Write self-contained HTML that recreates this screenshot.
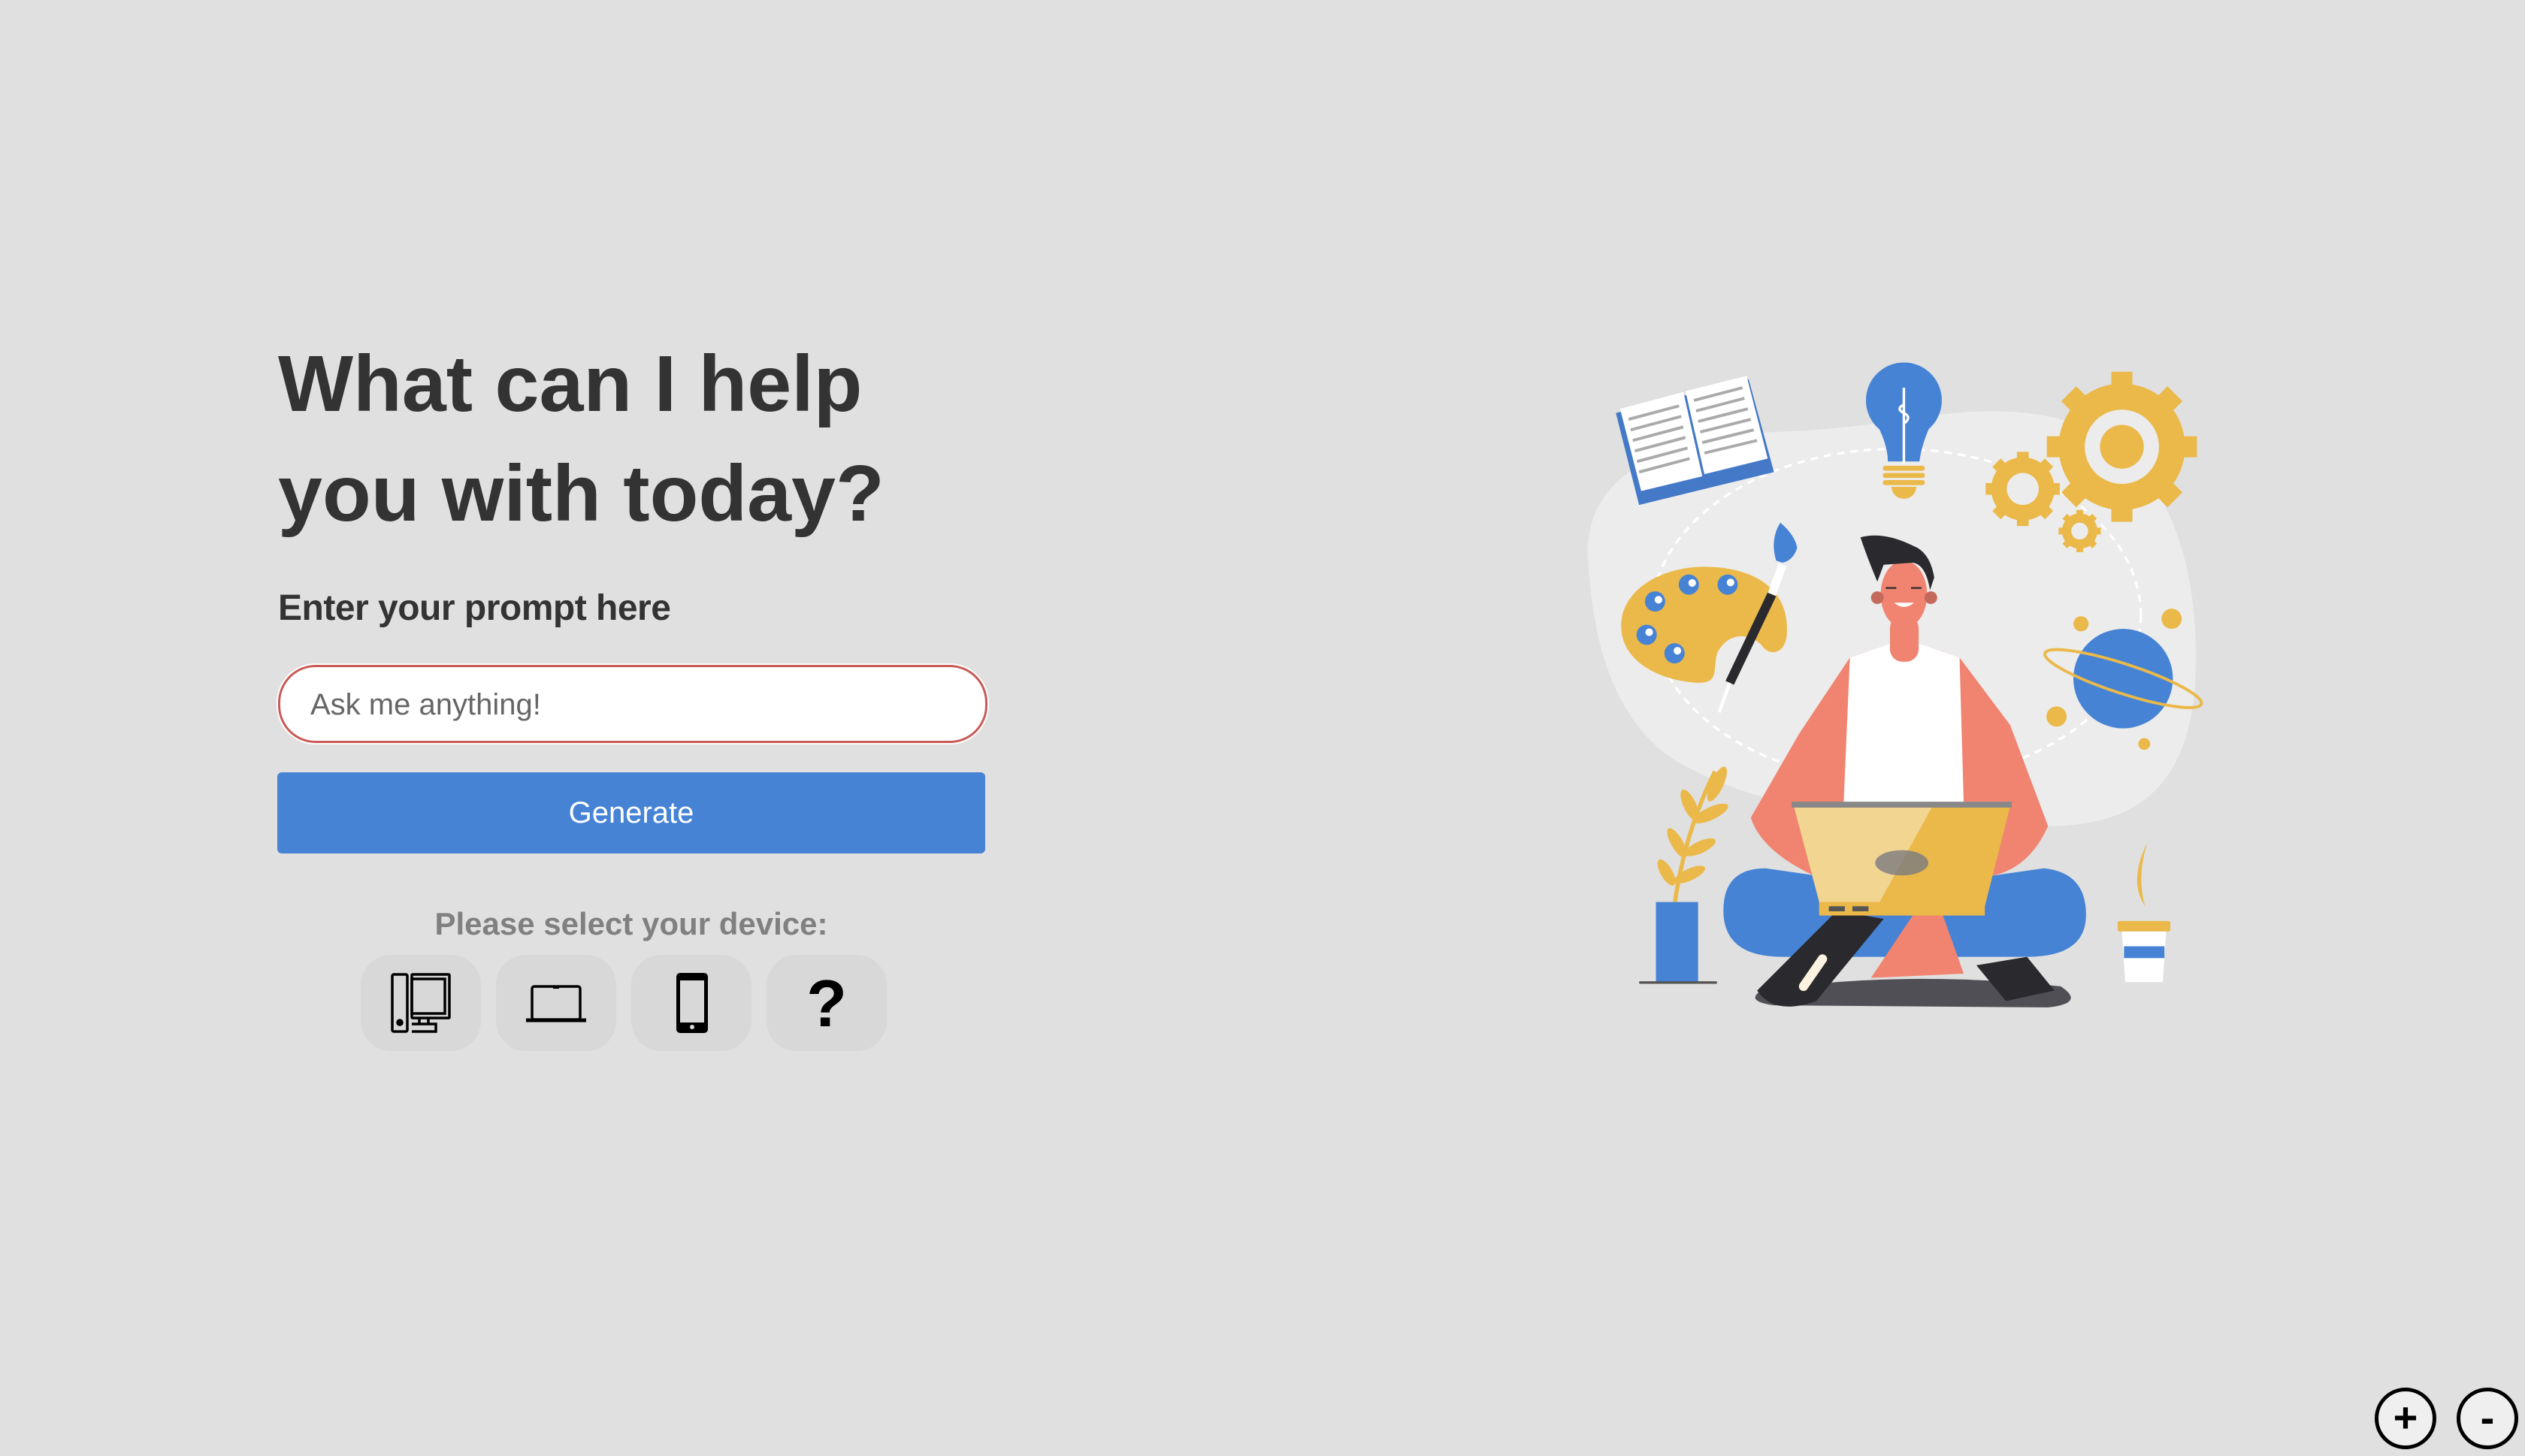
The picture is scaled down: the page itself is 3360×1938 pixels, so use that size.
<!DOCTYPE html>
<html><head><meta charset="utf-8"><style>
html,body{margin:0;padding:0}
body{width:3360px;height:1938px;background:#e0e0e0;position:relative;overflow:hidden;font-family:"Liberation Sans",sans-serif}
.h{position:absolute;left:370px;top:438px;font-weight:bold;font-size:106px;line-height:146px;color:#333;letter-spacing:0;margin:0}
.sub{position:absolute;left:370px;top:782px;font-weight:bold;font-size:48px;color:#333;letter-spacing:-0.5px}
.inp{position:absolute;left:370px;top:885px;width:938px;height:98px;border:3px solid #c85a57;border-radius:50px;background:#fff;box-shadow:0 0 0 2px #fff}
.inp span{position:absolute;left:40px;top:28px;font-size:40px;color:#666}
.btn{position:absolute;left:369px;top:1028px;width:942px;height:108px;background:#4683d5;border-radius:6px;color:#fff;font-size:40px;text-align:center;line-height:108px}
.ps{position:absolute;left:370px;width:940px;top:1206px;text-align:center;font-size:42px;color:#808080;font-weight:bold}
.dev{position:absolute;top:1271px;width:160px;height:128px;background:#d8d8d8;border-radius:40px}
.dev svg{position:absolute;left:40px;top:24px}
.z{position:absolute;top:1847px;width:72px;height:72px;border:5px solid #000;border-radius:50%;background:#efefef;text-align:center;font-weight:bold;font-size:56px;line-height:70px}
</style></head><body>
<h1 class="h">What can I help<br>you with today?</h1>
<div class="sub">Enter your prompt here</div>
<div class="inp"><span>Ask me anything!</span></div>
<div class="btn">Generate</div>
<div class="ps">Please select your device:</div>
<div class="dev" style="left:480px"><svg width="80" height="80" viewBox="0 0 80 80" fill="none" stroke="#000" stroke-width="3.5"><rect x="2" y="2" width="20" height="76" rx="2"/><circle cx="12" cy="66" r="3" fill="#000"/><rect x="28" y="2" width="50" height="58" rx="1"/><rect x="28" y="8" width="44" height="46"/><path d="M38 60v8M50 60v8M28 68h32v10H28"/></svg></div>
<div class="dev" style="left:660px"><svg width="80" height="80" viewBox="0 0 80 80" fill="none" stroke="#000" stroke-width="3.5"><rect x="8" y="18" width="64" height="44" rx="3"/><path d="M0 63h80" stroke-width="5"/><path d="M36 19h8" stroke-width="4"/></svg></div>
<div class="dev" style="left:840px"><svg width="80" height="80" viewBox="0 0 80 80"><rect x="20" y="0" width="42" height="80" rx="5" fill="#000"/><rect x="25" y="10" width="32" height="56" fill="#d8d8d8"/><circle cx="41" cy="72" r="3" fill="#d8d8d8"/></svg></div>
<div class="dev" style="left:1020px"><div style="position:absolute;left:0;right:0;top:14px;text-align:center;font-size:88px;font-weight:bold">?</div></div>
<div class="z" style="left:3160px">+</div>
<div class="z" style="left:3269px">-</div>

<svg style="position:absolute;left:2080px;top:460px" width="880" height="900" viewBox="0 0 1568 1604">
<path d="M60 520C40 330 200 220 500 205C800 195 900 140 1100 160C1380 190 1490 420 1500 700C1510 980 1420 1140 1150 1140C900 1140 500 1130 260 980C110 880 70 680 60 520Z" fill="#ececec"/>
<ellipse cx="790" cy="640" rx="580" ry="395" fill="none" stroke="#fff" stroke-width="6" stroke-dasharray="18 14"/>
<path d="M125 160L440 80L500 300L180 378Z" fill="#4479c7"/>
<path d="M135 150L285 110L330 310L185 345Z" fill="#fff"/>
<path d="M290 108L435 72L485 268L335 305Z" fill="#fff"/>
<g stroke="#aaa" stroke-width="7"><path d="M155 175L275 143M160 200L280 168M165 225L285 193M170 250L290 218M175 275L295 243M180 300L300 268M310 130L425 100M315 155L430 125M320 180L438 150M325 205L445 175M330 230L452 200M335 255L460 225"/></g>
<circle cx="808" cy="130" r="90" fill="#4683d5"/>
<path d="M735 170Q770 230 770 275H845Q850 230 880 170Z" fill="#4683d5"/>
<path d="M808 100V280M808 140q-20 10 0 20q20 10 0 25" stroke="#fff" stroke-width="6" fill="none"/>
<g fill="#ebb94a"><rect x="758" y="285" width="100" height="12" rx="6"/><rect x="758" y="302" width="100" height="12" rx="6"/><rect x="758" y="319" width="100" height="12" rx="6"/><path d="M778 335h60q-5 28-30 28t-30-28z"/></g>
<g fill="#ebb94a">
<circle cx="1325" cy="240" r="150"/>
<g transform="translate(1325 240)"><rect x="-25" y="-178" width="50" height="356"/><rect x="-178" y="-25" width="356" height="50"/><rect x="-25" y="-178" width="50" height="356" transform="rotate(45)"/><rect x="-25" y="-178" width="50" height="356" transform="rotate(-45)"/></g>
<circle cx="1090" cy="340" r="75"/>
<g transform="translate(1090 340)"><rect x="-14" y="-88" width="28" height="176"/><rect x="-88" y="-14" width="176" height="28"/><rect x="-14" y="-88" width="28" height="176" transform="rotate(45)"/><rect x="-14" y="-88" width="28" height="176" transform="rotate(-45)"/></g>
<circle cx="1225" cy="440" r="42"/>
<g transform="translate(1225 440)"><rect x="-8" y="-50" width="16" height="100"/><rect x="-50" y="-8" width="100" height="16"/><rect x="-8" y="-50" width="16" height="100" transform="rotate(45)"/><rect x="-8" y="-50" width="16" height="100" transform="rotate(-45)"/></g>
</g>
<circle cx="1325" cy="240" r="88" fill="#ececec"/><circle cx="1325" cy="240" r="52" fill="#ebb94a"/>
<circle cx="1090" cy="340" r="38" fill="#ececec"/><circle cx="1225" cy="440" r="20" fill="#ececec"/>
<path d="M140 640C160 560 260 520 350 525C470 530 540 590 530 690C525 730 490 740 470 710C440 680 390 680 365 730C355 770 370 800 320 800C220 795 120 740 140 640Z" fill="#ebb94a"/>
<g fill="#4683d5"><circle cx="218" cy="607" r="24"/><circle cx="298" cy="567" r="24"/><circle cx="390" cy="567" r="24"/><circle cx="198" cy="686" r="24"/><circle cx="264" cy="730" r="24"/></g>
<g fill="#fff"><circle cx="226" cy="603" r="9"/><circle cx="306" cy="563" r="9"/><circle cx="397" cy="562" r="9"/><circle cx="204" cy="680" r="9"/><circle cx="271" cy="724" r="9"/></g>
<path d="M495 590L395 800" stroke="#2a2a2e" stroke-width="22"/>
<path d="M395 800L370 870" stroke="#fff" stroke-width="8"/>
<path d="M495 590L520 520" stroke="#fff" stroke-width="20"/>
<path d="M505 510Q490 460 515 420Q550 450 555 480Q545 510 520 515Z" fill="#4683d5"/>
<circle cx="1328" cy="790" r="118" fill="#4683d5"/>
<ellipse cx="1328" cy="790" rx="195" ry="35" transform="rotate(18 1328 790)" fill="none" stroke="#ebb94a" stroke-width="7"/>
<g fill="#ebb94a"><circle cx="1228" cy="660" r="18"/><circle cx="1443" cy="648" r="24"/><circle cx="1170" cy="880" r="24"/><circle cx="1378" cy="945" r="14"/></g>
<path d="M265 1320Q290 1150 360 1010" stroke="#ebb94a" stroke-width="10" fill="none"/>
<g fill="#ebb94a"><ellipse cx="365" cy="1040" rx="15" ry="45" transform="rotate(25 365 1040)"/><ellipse cx="350" cy="1110" rx="45" ry="15" transform="rotate(-25 350 1110)"/><ellipse cx="300" cy="1090" rx="15" ry="40" transform="rotate(-25 300 1090)"/><ellipse cx="325" cy="1190" rx="40" ry="14" transform="rotate(-25 325 1190)"/><ellipse cx="270" cy="1180" rx="14" ry="40" transform="rotate(-30 270 1180)"/><ellipse cx="300" cy="1255" rx="40" ry="14" transform="rotate(-25 300 1255)"/><ellipse cx="245" cy="1250" rx="14" ry="35" transform="rotate(-30 245 1250)"/></g>
<rect x="220" y="1320" width="100" height="190" fill="#4683d5"/>
<rect x="180" y="1508" width="185" height="6" rx="3" fill="#555"/>
<path d="M1385 1180Q1340 1270 1380 1330Q1360 1260 1385 1180Z" fill="#ebb94a"/>
<rect x="1315" y="1365" width="125" height="25" rx="5" fill="#ebb94a"/>
<path d="M1325 1390H1430L1422 1510H1333Z" fill="#fff"/>
<rect x="1330" y="1425" width="96" height="28" fill="#4683d5"/>
<path d="M470 1530Q800 1480 1180 1520Q1240 1560 1150 1570L500 1565Q430 1555 470 1530Z" fill="#4f4f55"/>
<path d="M680 740L780 705H840L940 740L1060 900L1150 1140Q1100 1250 1000 1260L600 1260Q470 1200 445 1120L560 920Z" fill="#f08470"/>
<path d="M680 740L780 705H840L940 740L950 1090H665Z" fill="#fff"/>
<path d="M380 1340Q380 1240 480 1240L620 1260L1000 1260L1140 1240Q1240 1250 1240 1350Q1240 1450 1100 1450L520 1450Q380 1450 380 1340Z" fill="#4683d5"/>
<path d="M700 1350L830 1350L730 1500L950 1490L900 1350Z" fill="#f08470"/>
<path d="M460 1530L650 1340L760 1360L600 1555Q500 1590 460 1530Z" fill="#2a2a2e"/>
<path d="M980 1470L1100 1450L1165 1530L1050 1555Z" fill="#2a2a2e"/>
<rect x="775" y="640" width="68" height="110" rx="30" fill="#f08470"/>
<ellipse cx="808" cy="590" rx="55" ry="80" fill="#f08470"/>
<circle cx="745" cy="598" r="15" fill="#c5685c"/><circle cx="872" cy="598" r="15" fill="#c5685c"/>
<path d="M705 455Q760 440 830 475Q870 490 880 550L870 580Q860 520 830 515L760 520L745 560Q720 500 705 455Z" fill="#2a2a2e"/>
<path d="M785 610Q808 630 832 610Z" fill="#fff"/>
<path d="M765 575h25M825 575h25" stroke="#2a2a2e" stroke-width="4"/>
<path d="M545 1085H1062L1000 1330H610Z" fill="#ebb94a"/>
<path d="M545 1085H880L745 1330H610Z" fill="#f3d592"/>
<rect x="542" y="1082" width="522" height="14" fill="#888"/>
<rect x="607" y="1320" width="393" height="32" fill="#ebb94a"/>
<rect x="630" y="1330" width="38" height="12" fill="#555"/><rect x="686" y="1330" width="38" height="12" fill="#555"/>
<ellipse cx="803" cy="1227" rx="63" ry="30" fill="#7a7a80" opacity=".8"/>
<path d="M570 1520L615 1455" stroke="#fdf3e0" stroke-width="22" stroke-linecap="round"/>
</svg>
</body></html>
